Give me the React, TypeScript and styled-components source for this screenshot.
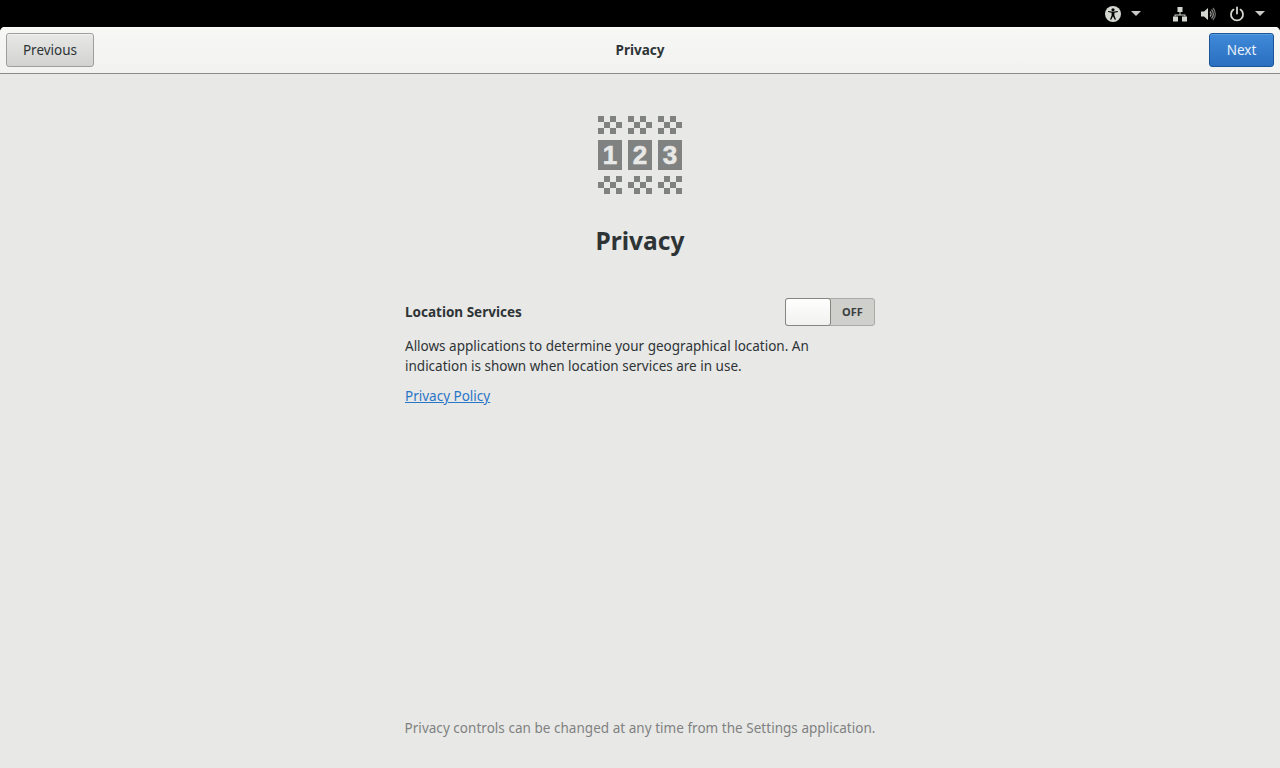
import React from "react";
import styled, { createGlobalStyle } from "styled-components";

const Global = createGlobalStyle`
  html, body { margin: 0; padding: 0; height: 100%; background: #000; }
  #root { height: 768px; width: 1280px; overflow: hidden; }
  * { box-sizing: border-box; }
`;

const Screen = styled.div`
  width: 1280px;
  height: 768px;
  display: flex;
  flex-direction: column;
  background: #000;
  font-family: "Noto Sans", "Open Sans", sans-serif;
  color: #2e3436;
`;

const TopBar = styled.div`
  height: 27px;
  flex: none;
  display: flex;
  justify-content: flex-end;
  align-items: center;
  padding: 0 15px 0 0;
`;

const TrayItem = styled.span<{ $ml: number }>`
  display: flex;
  margin-left: ${(p) => p.$ml}px;
`;

const Caret = styled.span`
  width: 0;
  height: 0;
  margin-left: 10px;
  border-left: 5px solid transparent;
  border-right: 5px solid transparent;
  border-top: 5px solid #c9cbc8;
`;

const Window = styled.div`
  flex: 1;
  display: flex;
  flex-direction: column;
  background: #e8e8e7;
  border-radius: 5px 5px 0 0;
  overflow: hidden;
`;

const Header = styled.header`
  height: 47px;
  flex: none;
  display: grid;
  grid-template-columns: 1fr auto 1fr;
  align-items: center;
  padding: 0 6px 1px;
  background: linear-gradient(#f7f7f6, #f2f2f1);
  border-bottom: 1px solid #8a8b87;
  box-shadow: inset 0 1px 0 #fff;
`;

const HeaderTitle = styled.div`
  font-size: 13.5px;
  font-weight: 700;
  color: #2e3436;
`;

const Button = styled.button<{ $primary?: boolean; $w: number }>`
  width: ${(p) => p.$w}px;
  height: 34px;
  padding: 0;
  justify-self: ${(p) => (p.$primary ? "end" : "start")};
  font: inherit;
  font-size: 13.5px;
  border-radius: 3px;
  border: 1px solid ${(p) => (p.$primary ? "#1b5597" : "#9e9f9b")};
  color: ${(p) => (p.$primary ? "#e8f1fa" : "#2e3436")};
  background: ${(p) =>
    p.$primary
      ? "linear-gradient(#3f8ad8, #2b6fc0)"
      : "linear-gradient(#e8e8e7, #d2d2d0)"};
  box-shadow: inset 0 1px 0 ${(p) => (p.$primary ? "#5c9fe0" : "#f2f2f1")};
`;

const Body = styled.main`
  flex: 1;
  display: flex;
  flex-direction: column;
  align-items: center;
  padding-top: 42px;
`;

const Logo = styled.div`
  display: grid;
  grid-template-columns: repeat(3, 24px);
  column-gap: 6px;
  row-gap: 6px;
  width: 84px;
`;

const Checker = styled.div`
  display: grid;
  grid-template-columns: repeat(4, 6px);
  grid-auto-rows: 6px;
`;

const Cell = styled.span<{ $on: boolean }>`
  background: ${(p) => (p.$on ? "#808181" : "transparent")};
`;

const NumberTile = styled.div`
  height: 30px;
  background: #808181;
  display: flex;
  align-items: center;
  justify-content: center;
  font-family: "Liberation Sans", sans-serif;
  font-size: 26px;
  font-weight: 700;
  line-height: 30px;
  color: #e8e8e7;
  -webkit-text-stroke: 0.6px #e8e8e7;
`;

const Title = styled.h1`
  margin: 30px 0 0;
  height: 33px;
  font-size: 24.5px;
  line-height: 33px;
  font-weight: 700;
  color: #2e3436;
`;

const Form = styled.section`
  width: 470px;
  margin-top: 41px;
  display: flex;
  flex-direction: column;
`;

const SettingRow = styled.div`
  display: flex;
  align-items: center;
  justify-content: space-between;
  height: 28px;
`;

const SettingLabel = styled.span`
  font-size: 13.5px;
  font-weight: 700;
`;

const Toggle = styled.div`
  width: 90px;
  height: 28px;
  display: flex;
  border: 1px solid #a9aaa6;
  border-radius: 3px;
  background: #cfcfcc;
`;

const Knob = styled.div`
  width: 46px;
  margin: -1px 0 -1px -1px;
  border: 1px solid #85867f;
  border-radius: 3px;
  background: linear-gradient(#ffffff, #f1f1ef);
`;

const ToggleText = styled.span`
  flex: 1;
  text-align: center;
  font-size: 11px;
  font-weight: 700;
  line-height: 26px;
  color: #3a3f40;
`;

const Description = styled.p`
  margin: 10px 0 0;
  width: 420px;
  font-size: 13.5px;
  line-height: 20px;
`;

const PolicyLink = styled.a`
  margin-top: 10px;
  font-size: 13.5px;
  line-height: 20px;
  color: #2a76c6;
  text-decoration: underline;
  align-self: flex-start;
`;

const Footer = styled.div`
  margin-top: auto;
  height: 20px;
  margin-bottom: 30px;
  font-size: 13.5px;
  line-height: 20px;
  letter-spacing: 0.03px;
  color: #7f8281;
`;

const A11yIcon = () => (
  <svg width="16" height="16" viewBox="0 0 16 16">
    <circle cx="8" cy="8" r="8" fill="#d3d7cf" />
    <circle cx="8" cy="3.8" r="1.6" fill="#000" />
    <path d="M3 6l3.6.8v2.6L5 13.4l1.2.4L8 10.2l1.8 3.6 1.2-.4-1.6-4V6.8L13 6l-.3-1.1L8 5.7 3.3 4.9z" fill="#000" />
  </svg>
);

const NetworkIcon = () => (
  <svg width="16" height="16" viewBox="0 0 16 16" fill="#d3d7cf">
    <rect x="5.5" y="1" width="5" height="5" />
    <rect x="1" y="10.5" width="5" height="5" />
    <rect x="10" y="10.5" width="5" height="5" />
    <path d="M7.5 6h1v2.5h5v2h-1v-1h-9v1h-1v-2h5z" />
  </svg>
);

const VolumeIcon = () => (
  <svg width="16" height="16" viewBox="0 0 16 16" fill="none">
    <path d="M1 5.5h3L8 2v12l-4-3.5H1z" fill="#d3d7cf" />
    <path d="M10 5.5a3.5 3.5 0 0 1 0 5" stroke="#9a9c98" strokeWidth="1.3" />
    <path d="M11.5 3.5a6.5 6.5 0 0 1 0 9" stroke="#8a8c88" strokeWidth="1.3" />
    <path d="M13 2a9 9 0 0 1 0 12" stroke="#777" strokeWidth="1.2" />
  </svg>
);

const PowerIcon = () => (
  <svg width="16" height="16" viewBox="0 0 16 16" fill="none" stroke="#d3d7cf" strokeWidth="1.8" strokeLinecap="round">
    <path d="M8 1.5v6" />
    <path d="M4.5 3.6a6 6 0 1 0 7 0" />
  </svg>
);

const rowsTop = [
  [1, 0, 1, 0],
  [0, 1, 0, 1],
  [1, 0, 1, 0],
];
const rowsBottom = [
  [0, 1, 0, 1],
  [1, 0, 1, 0],
  [0, 1, 0, 1],
];

const CheckerTile = ({ rows }: { rows: number[][] }) => (
  <Checker>
    {rows.flat().map((v, i) => (
      <Cell key={i} $on={!!v} />
    ))}
  </Checker>
);

export default function App() {
  return (
    <Screen>
      <Global />
      <TopBar>
        <TrayItem $ml={0}><A11yIcon /></TrayItem>
        <Caret />
        <TrayItem $ml={31}><NetworkIcon /></TrayItem>
        <TrayItem $ml={12}><VolumeIcon /></TrayItem>
        <TrayItem $ml={13}><PowerIcon /></TrayItem>
        <Caret />
      </TopBar>
      <Window>
        <Header>
          <Button $w={88}>Previous</Button>
          <HeaderTitle>Privacy</HeaderTitle>
          <Button $w={65} $primary>Next</Button>
        </Header>
        <Body>
          <Logo>
            {[0, 1, 2].map((i) => <CheckerTile key={i} rows={rowsTop} />)}
            {["1", "2", "3"].map((n) => <NumberTile key={n}>{n}</NumberTile>)}
            {[0, 1, 2].map((i) => <CheckerTile key={i} rows={rowsBottom} />)}
          </Logo>
          <Title>Privacy</Title>
          <Form>
            <SettingRow>
              <SettingLabel>Location Services</SettingLabel>
              <Toggle>
                <Knob />
                <ToggleText>OFF</ToggleText>
              </Toggle>
            </SettingRow>
            <Description>
              Allows applications to determine your geographical location. An indication is shown when location services are in use.
            </Description>
            <PolicyLink href="#">Privacy Policy</PolicyLink>
          </Form>
          <Footer>Privacy controls can be changed at any time from the Settings application.</Footer>
        </Body>
      </Window>
    </Screen>
  );
}
